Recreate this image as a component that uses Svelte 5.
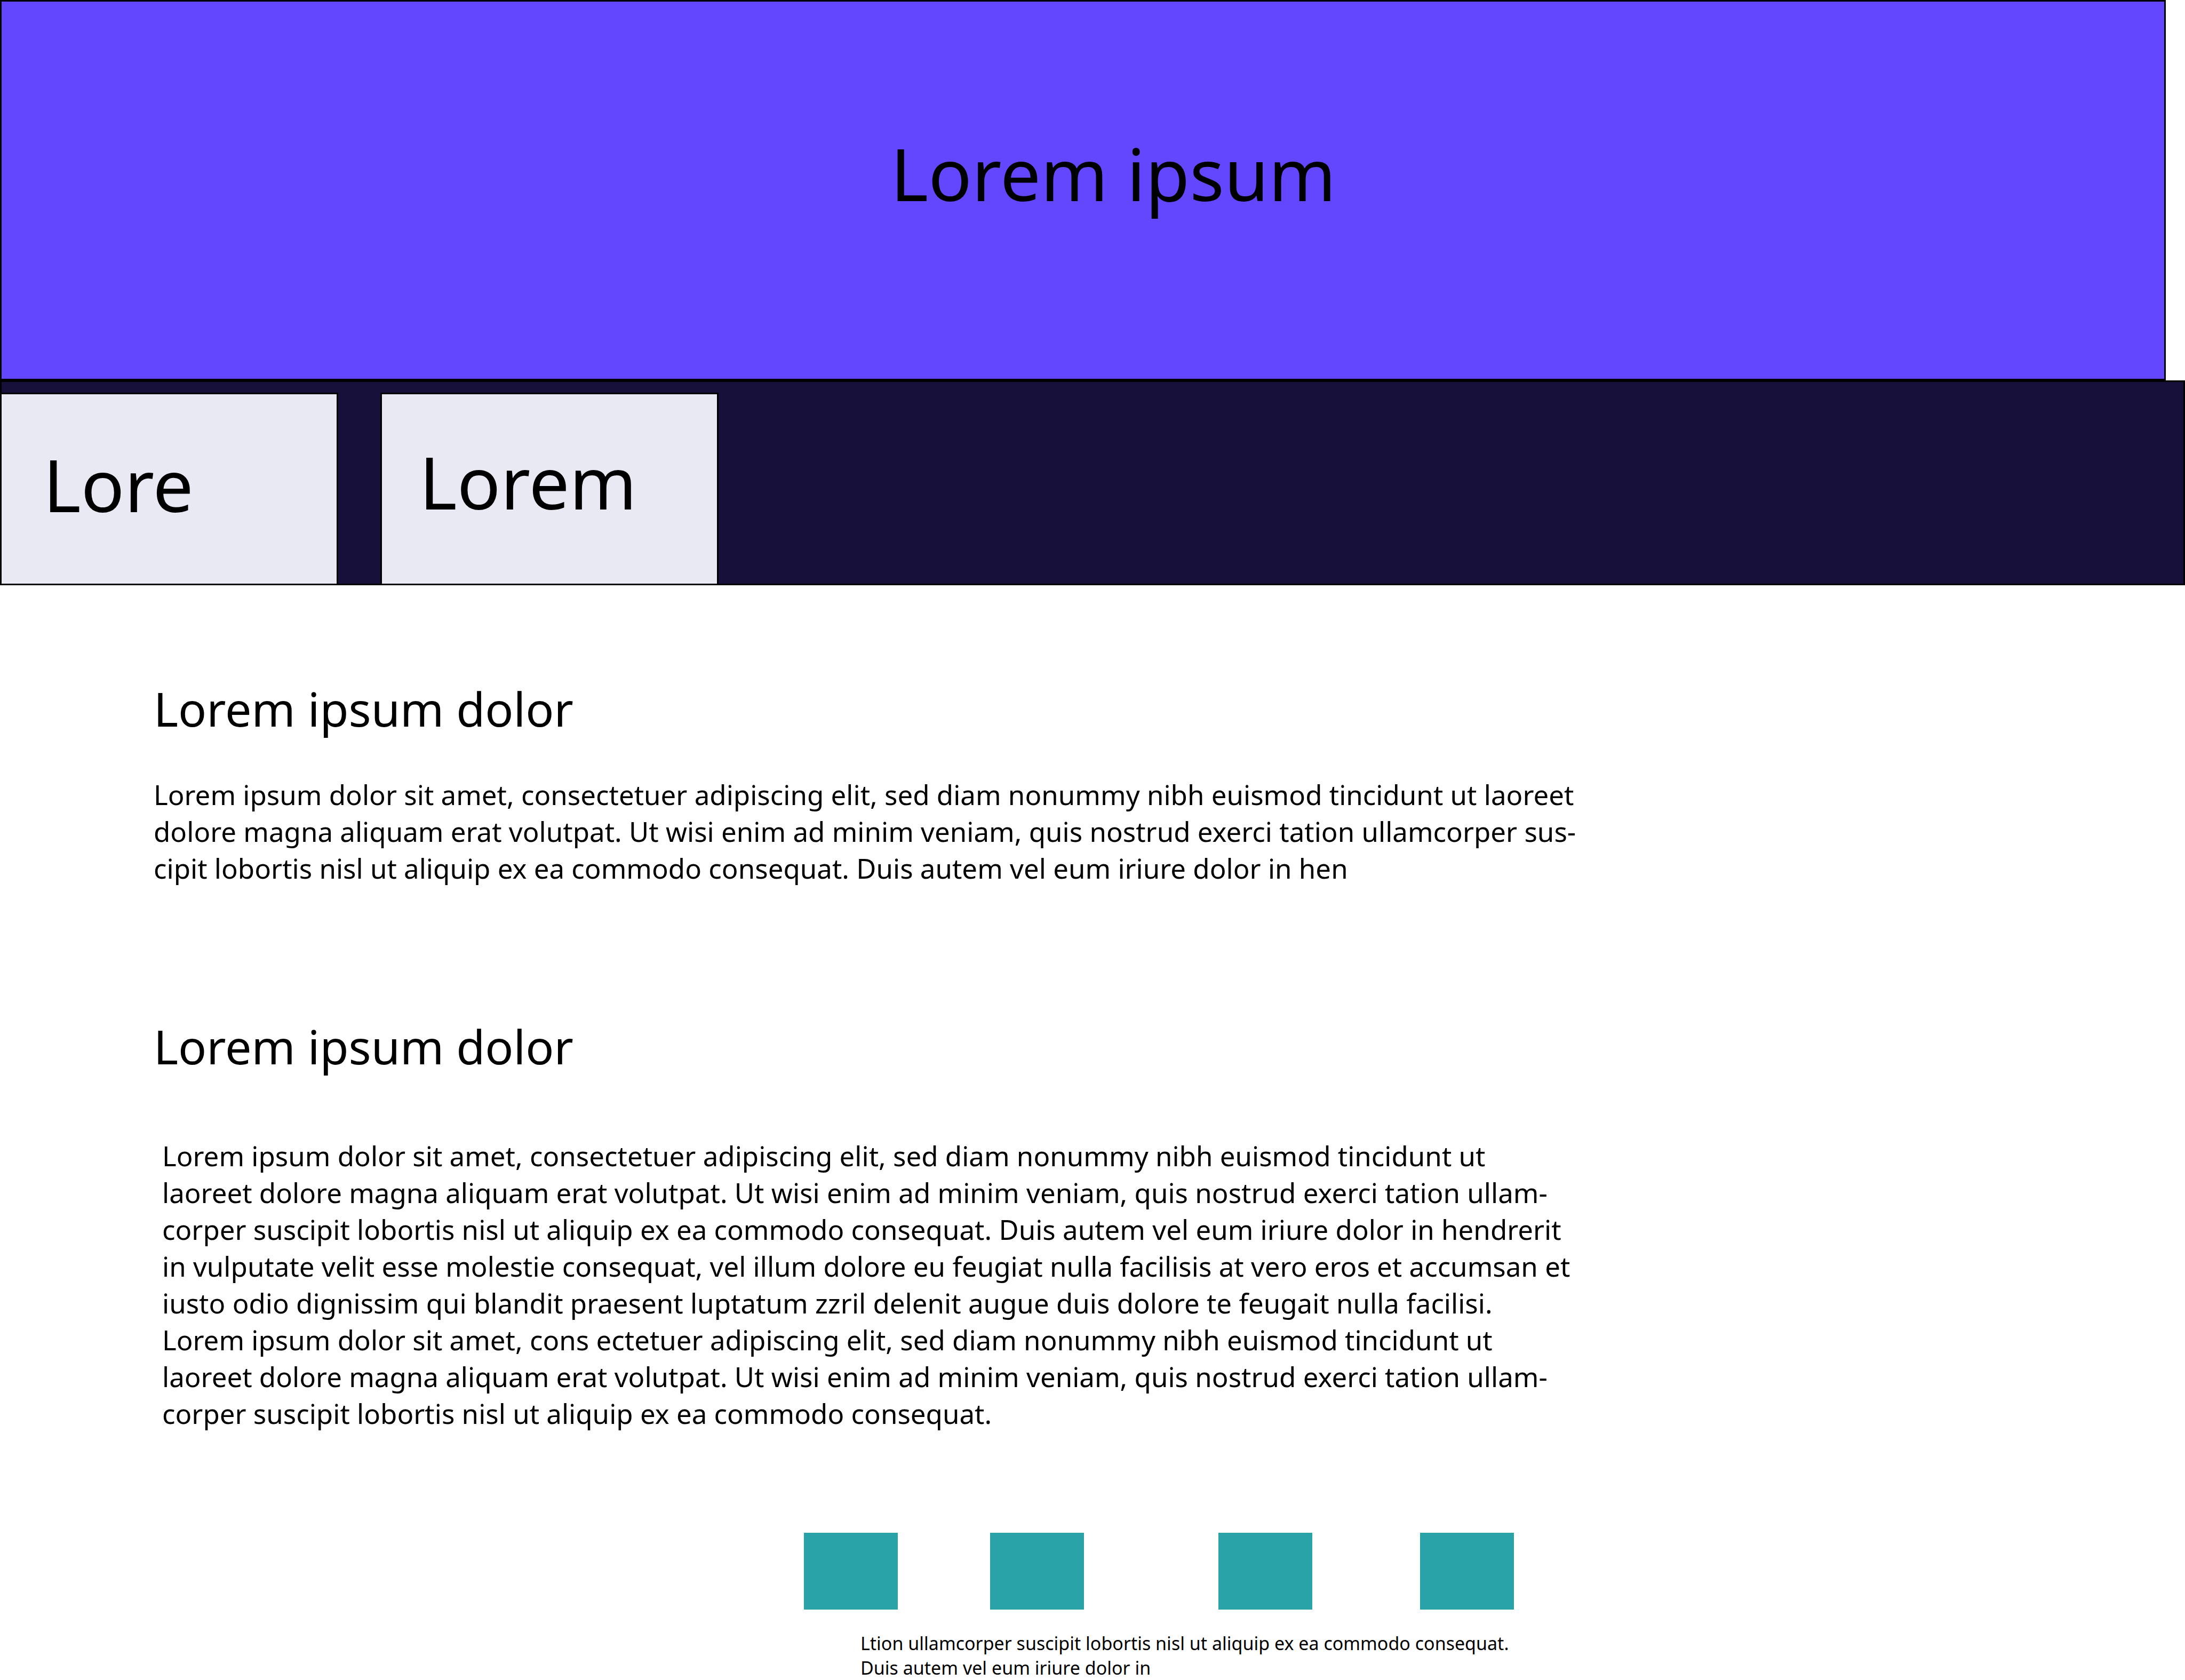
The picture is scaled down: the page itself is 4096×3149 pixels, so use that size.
<script>
  const intro = [
    'Lorem ipsum dolor sit amet, consectetuer adipiscing elit, sed diam nonummy nibh euismod tincidunt ut laoreet',
    'dolore magna aliquam erat volutpat. Ut wisi enim ad minim veniam, quis nostrud exerci tation ullamcorper sus-',
    'cipit lobortis nisl ut aliquip ex ea commodo consequat. Duis autem vel eum iriure dolor in hen'
  ];

  const details = [
    'Lorem ipsum dolor sit amet, consectetuer adipiscing elit, sed diam nonummy nibh euismod tincidunt ut',
    'laoreet dolore magna aliquam erat volutpat. Ut wisi enim ad minim veniam, quis nostrud exerci tation ullam-',
    'corper suscipit lobortis nisl ut aliquip ex ea commodo consequat. Duis autem vel eum iriure dolor in hendrerit',
    'in vulputate velit esse molestie consequat, vel illum dolore eu feugiat nulla facilisis at vero eros et accumsan et',
    'iusto odio dignissim qui blandit praesent luptatum zzril delenit augue duis dolore te feugait nulla facilisi.',
    'Lorem ipsum dolor sit amet, cons ectetuer adipiscing elit, sed diam nonummy nibh euismod tincidunt ut',
    'laoreet dolore magna aliquam erat volutpat. Ut wisi enim ad minim veniam, quis nostrud exerci tation ullam-',
    'corper suscipit lobortis nisl ut aliquip ex ea commodo consequat.'
  ];

  const footnote = [
    'Ltion ullamcorper suscipit lobortis nisl ut aliquip ex ea commodo consequat.',
    'Duis autem vel eum iriure dolor in'
  ];
</script>

{#snippet lines(list)}
  {#each list as line}<span class="line">{line}</span>{/each}
{/snippet}

<div class="page">
  <header class="banner">
    <h1>Lorem ipsum</h1>
  </header>

  <nav class="tabs">
    <a class="tab first" href="#intro">Lore</a>
    <a class="tab second" href="#details">Lorem</a>
  </nav>

  <main>
    <section id="intro">
      <h2>Lorem ipsum dolor</h2>
      <p>{@render lines(intro)}</p>
    </section>

    <section id="details">
      <h2>Lorem ipsum dolor</h2>
      <p>{@render lines(details)}</p>
    </section>
  </main>

  <footer>
    <div class="tiles">
      <span class="tile"></span>
      <span class="tile"></span>
      <span class="tile"></span>
      <span class="tile"></span>
    </div>
    <p class="footnote">{@render lines(footnote)}</p>
  </footer>
</div>

<style>
  :global(body) {
    margin: 0;
    background: #fff;
  }

  .page {
    font-family: 'Noto Sans', 'Open Sans', sans-serif;
    color: #000;
  }

  h1,
  h2,
  p {
    margin: 0;
    font-weight: 400;
  }

  .line {
    display: block;
    white-space: nowrap;
  }

  .banner {
    margin-right: 36px;
    padding: 242px 0 305px 114px;
    border: 3px solid #000;
    background: #6247ff;
    text-align: center;
  }

  h1,
  .tab {
    font-size: 135px;
    line-height: 160px;
  }

  .tabs {
    display: flex;
    gap: 79px;
    padding-top: 20px;
    border: 3px solid #000;
    background: #17103b;
  }

  /* Tabs share the bar's outer border along the bottom and left edges. */
  .tab {
    box-sizing: border-box;
    width: 634px;
    height: 361px;
    margin-bottom: -3px;
    border: 3px solid #000;
    background: #e9e9f3;
    color: inherit;
    text-decoration: none;
  }

  .first {
    margin-left: -3px;
    padding: 89px 0 0 78px;
  }

  .second {
    padding: 84px 0 0 70px;
  }

  main {
    padding: 176px 288px 0;
  }

  h2 {
    font-size: 88px;
    line-height: 110px;
  }

  main p {
    font-size: 51px;
    line-height: 69px;
  }

  #intro p {
    margin-top: 72px;
  }

  #details {
    margin-top: 244px;
  }

  #details p {
    margin-top: 116px;
    padding-left: 16px;
  }

  footer {
    padding: 189px 0 0 1507px;
  }

  .tiles {
    display: grid;
    grid-template-columns: 349px 428px 378px 176px;
  }

  .tile {
    width: 176px;
    height: 144px;
    background: #29a2a8;
  }

  .footnote {
    margin-top: 40px;
    padding-left: 106px;
    font-size: 34px;
    line-height: 46px;
  }
</style>
